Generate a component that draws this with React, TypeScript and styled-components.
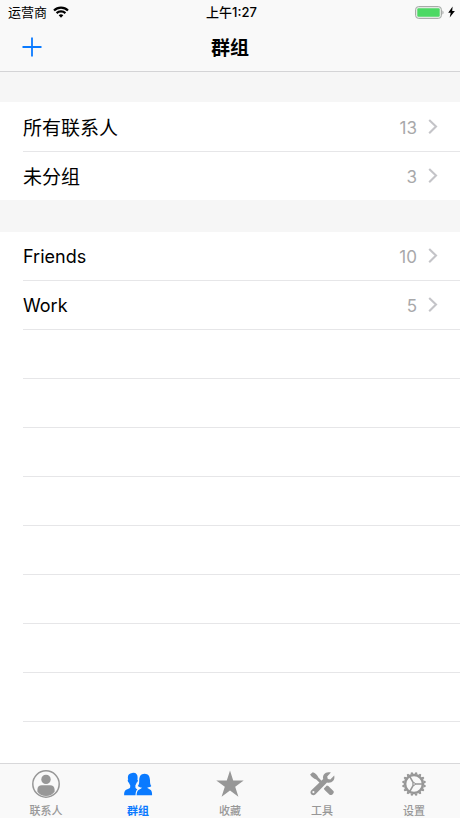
import React from 'react';
import styled, { createGlobalStyle } from 'styled-components';

const GlobalStyle = createGlobalStyle`
  *, *::before, *::after { box-sizing: border-box; }
  body {
    margin: 0;
    background: #fff;
    color: #000;
    font-family: Inter, "Noto Sans CJK SC", sans-serif;
  }
  button { font: inherit; border: 0; padding: 0; background: none; cursor: pointer; }
`;

const Screen = styled.div`
  height: 100vh;
  display: flex;
  flex-direction: column;
  overflow: hidden;
`;

const Header = styled.header`
  flex: none;
  background: #f9f9f9;
  border-bottom: 1px solid #d4d4d6;
`;

const Thirds = styled.div`
  display: grid;
  grid-template-columns: 1fr auto 1fr;
  align-items: center;
`;

const StatusBar = styled(Thirds)`
  height: 24px;
  padding: 0 5px 0 8px;
  font-size: 13px;
  line-height: 24px;
`;

const StatusSide = styled.div<{ $end?: boolean }>`
  display: flex;
  align-items: center;
  justify-content: ${(p) => (p.$end ? 'flex-end' : 'flex-start')};
  gap: ${(p) => (p.$end ? 4 : 6)}px;
`;

const Clock = styled.time`
  font-weight: 500;
`;

const NavBar = styled(Thirds)`
  height: 47px;
  padding: 0 22px 2px;
`;

const AddButton = styled.button`
  display: flex;
  width: 20px;
  height: 20px;
  color: #0a7aff;
`;

const Title = styled.h1`
  margin: 0;
  padding-top: 4px;
  font-size: 19px;
  line-height: 28px;
  font-weight: 600;
`;

const Content = styled.main`
  flex: 1;
  min-height: 0;
  overflow: hidden;
`;

const SectionGap = styled.div<{ $size: number }>`
  height: ${(p) => p.$size}px;
  background: #f6f6f6;
`;

const List = styled.ul`
  list-style: none;
  margin: 0;
  padding: 0 0 0 23px;
`;

const Item = styled.li<{ $line: 'top' | 'bottom' | 'none' }>`
  height: 49px;
  border-style: solid;
  border-color: #e6e6e8;
  border-width: ${(p) => (p.$line === 'top' ? '1px 0 0' : p.$line === 'bottom' ? '0 0 1px' : '0')};
`;

const RowButton = styled.button`
  display: flex;
  align-items: center;
  width: 100%;
  height: 100%;
  padding-right: 22px;
  text-align: left;
  color: #000;
`;

const RowLabel = styled.span`
  flex: 1;
  padding-top: 4px;
  font-size: 19px;
  line-height: 28px;
`;

const LatinLabel = styled(RowLabel)`
  padding-top: 2px;
  font-size: 18px;
`;

const Count = styled.span`
  margin-right: 11px;
  padding-top: 2px;
  font-size: 17px;
  line-height: 28px;
  color: #a8a8aa;
`;

const TabBar = styled.nav`
  flex: none;
  display: grid;
  grid-template-columns: repeat(5, 1fr);
  height: 55px;
  background: #f9f9f9;
  border-top: 1px solid #d8d8da;
`;

const Tab = styled.button<{ $active?: boolean }>`
  display: flex;
  flex-direction: column;
  align-items: center;
  padding-top: 5px;
  color: ${(p) => (p.$active ? '#0a7aff' : '#979797')};
`;

const TabLabel = styled.span<{ $active?: boolean }>`
  margin-top: 4px;
  font-size: 11px;
  line-height: 16px;
  font-weight: ${(p) => (p.$active ? 700 : 500)};
`;

const WifiIcon = () => (
  <svg width="16" height="12" viewBox="0 0 16 12" fill="none" stroke="#000" strokeWidth="2.2" aria-hidden="true">
    <path d="M1 4.5a10 10 0 0 1 14 0M3.6 7.1a6.3 6.3 0 0 1 8.8 0" />
    <path d="M8 11.7 5.7 9.3a3.3 3.3 0 0 1 4.6 0Z" fill="#000" stroke="none" />
  </svg>
);

const BatteryIcon = () => (
  <svg width="29" height="13" viewBox="0 0 29 13" aria-hidden="true">
    <rect x="0.6" y="0.6" width="25.8" height="11.8" rx="3" fill="#e9efe9" stroke="#a0a4a2" />
    <rect x="2.3" y="2.3" width="22.4" height="8.4" rx="1.2" fill="#4cd964" />
    <path d="M27.5 4.5c1.3.6 1.3 3.4 0 4Z" fill="#929694" />
  </svg>
);

const BoltIcon = () => (
  <svg width="7" height="12" viewBox="0 0 7 12" aria-hidden="true">
    <path d="M4.6.5.2 6.8h2.5l-1 4.8L6.9 5H4.2Z" fill="#000" />
  </svg>
);

const PlusIcon = () => (
  <svg width="20" height="20" viewBox="0 0 20 20" fill="none" stroke="currentColor" strokeWidth="1.8" aria-hidden="true">
    <path d="M10 .5v19M.5 10h19" />
  </svg>
);

const Chevron = () => (
  <svg width="10" height="16" viewBox="0 0 10 16" fill="none" stroke="#c4c4c8" strokeWidth="2.1" aria-hidden="true">
    <path d="M1.2 1 8 7.6l-6.8 6.6" />
  </svg>
);

const ContactIcon = () => (
  <svg width="30" height="30" viewBox="0 0 30 30" aria-hidden="true">
    <circle cx="15" cy="15" r="13.2" fill="none" stroke="currentColor" strokeWidth="1.5" />
    <circle cx="15" cy="10.4" r="4.7" fill="currentColor" />
    <path d="M6.4 22.8v-2.3c0-2.8 1.9-4.3 4.4-4.3h8.4c2.5 0 4.4 1.5 4.4 4.3v2.3c-2 2.6-5 4.3-8.6 4.3s-6.6-1.7-8.6-4.3Z" fill="currentColor" />
  </svg>
);

const GroupIcon = () => (
  <svg width="30" height="30" viewBox="0 0 30 30" fill="currentColor" aria-hidden="true">
    <path d="M9.4 3.9c3.6-.5 5.4 1.7 5.2 4.8 0 .8-.1 1.4-.2 2 .7.1.6 1.5 0 2.3-.3.5-.5.6-.7.6-.3 1.2-.8 2-1.3 2.7v2.1c.2.9.9 1.4 2 1.8-1.2 1.2-1.8 3-1.9 6.1H1.1c0-3.5.6-5 2.6-5.8 1.9-.8 3.2-1.1 3.5-2.3v-2c-.6-.7-1-1.6-1.3-2.7-.5 0-.8-.5-1-1.3-.3-.9-.2-1.5.3-1.6-.9-3.6.2-6.4 4.2-6.7Z" />
    <path d="M21.6 4.7c3.8 0 5.3 2.8 5.4 6.5 0 2.9.3 4.6 1.3 5.9-.9 1-2.2 1.4-3.9 1.5.2 1 1.4 1.3 2.6 1.9 1.6.8 2.1 2.4 2.1 5.8H13.6c.1-3.1.8-4.8 2.3-5.6 1.2-.6 2.7-1 2.9-2.1-1.8 0-3.2-.6-4-1.5 1.2-1.3 1.4-3 1.4-5.9.1-3.7 1.5-6.5 5.4-6.5Z" />
  </svg>
);

const StarIcon = () => (
  <svg width="30" height="30" viewBox="0 0 30 30" fill="currentColor" aria-hidden="true">
    <path d="m15 1.6 3.2 10h10.5l-8.5 6.1 3.2 10-8.4-6.2-8.4 6.2 3.2-10-8.5-6.1h10.5Z" />
  </svg>
);

const ToolsIcon = () => (
  <svg width="30" height="30" viewBox="0 0 30 30" fill="currentColor" aria-hidden="true">
    <path d="M3.1 5.4 5.8 3.2c2.5.9 4.6 2.7 5.6 5.2l3.4 3.6-1.9 1.9-3.6-3.5C6.8 9.6 4.4 7.8 3.1 5.4Z" />
    <path d="m16.9 19.4 2.9-2.8 1.5.5 5.1 4.9c1.5 1.6-2 5.3-3.8 3.7l-5.2-5Z" />
    <path d="M23.9 3.6 20.2 7.4l.6 2.5 2.5.6 3.9-3.9c1.2 4.9-2.9 8.2-7.2 7L8.5 25.3c-2.9 2.6-6.8-1.3-4.1-4.1L16.2 9.9c-1.1-4.4 2.8-8 7.7-6.3ZM6.4 22a1.1 1.1 0 1 0 0 2.2 1.1 1.1 0 0 0 0-2.2Z" fillRule="evenodd" />
  </svg>
);

const TEETH = Array.from({ length: 16 }, (_, i) => i * 22.5 + 11.25);

const GearIcon = () => (
  <svg width="30" height="30" viewBox="0 0 30 30" fill="none" stroke="currentColor" aria-hidden="true">
    <circle cx="15" cy="15" r="8.9" strokeWidth="2.5" />
    {TEETH.map((angle) => (
      <path key={angle} d="m13.4 5.3.8-2.2h1.6l.8 2.2Z" fill="currentColor" stroke="none" transform={`rotate(${angle} 15 15)`} />
    ))}
    <path d="M16 15h8M14.5 14.1l-4-6.9M14.5 15.9l-4 6.9" strokeWidth="1.6" />
    <circle cx="15" cy="15" r="1.3" strokeWidth="1" />
  </svg>
);

type Group = { name: string; count: number; latin?: boolean };

const systemGroups: Group[] = [
  { name: '所有联系人', count: 13 },
  { name: '未分组', count: 3 },
];

const userGroups: Group[] = [
  { name: 'Friends', count: 10, latin: true },
  { name: 'Work', count: 5, latin: true },
];

const tabs = [
  { label: '联系人', Icon: ContactIcon },
  { label: '群组', Icon: GroupIcon, active: true },
  { label: '收藏', Icon: StarIcon },
  { label: '工具', Icon: ToolsIcon },
  { label: '设置', Icon: GearIcon },
];

const GroupRow = ({ group }: { group: Group }) => {
  const Label = group.latin ? LatinLabel : RowLabel;
  return (
    <RowButton type="button">
      <Label>{group.name}</Label>
      <Count>{group.count}</Count>
      <Chevron />
    </RowButton>
  );
};

export default function App() {
  return (
    <Screen lang="zh-CN">
      <GlobalStyle />
      <Header>
        <StatusBar>
          <StatusSide>
            <span>运营商</span>
            <WifiIcon />
          </StatusSide>
          <Clock>上午1:27</Clock>
          <StatusSide $end>
            <BatteryIcon />
            <BoltIcon />
          </StatusSide>
        </StatusBar>
        <NavBar>
          <AddButton type="button" aria-label="添加群组">
            <PlusIcon />
          </AddButton>
          <Title>群组</Title>
        </NavBar>
      </Header>
      <Content>
        <SectionGap $size={30} />
        <List>
          {systemGroups.map((group, i) => (
            <Item key={group.name} $line={i > 0 ? 'top' : 'none'}>
              <GroupRow group={group} />
            </Item>
          ))}
        </List>
        <SectionGap $size={32} />
        <List>
          {userGroups.map((group) => (
            <Item key={group.name} $line="bottom">
              <GroupRow group={group} />
            </Item>
          ))}
        </List>
        <List aria-hidden="true">
          {Array.from({ length: 8 }, (_, i) => (
            <Item key={i} $line="bottom" />
          ))}
        </List>
      </Content>
      <TabBar>
        {tabs.map(({ label, Icon, active }) => (
          <Tab key={label} type="button" $active={active} aria-current={active ? 'page' : undefined}>
            <Icon />
            <TabLabel $active={active}>{label}</TabLabel>
          </Tab>
        ))}
      </TabBar>
    </Screen>
  );
}
